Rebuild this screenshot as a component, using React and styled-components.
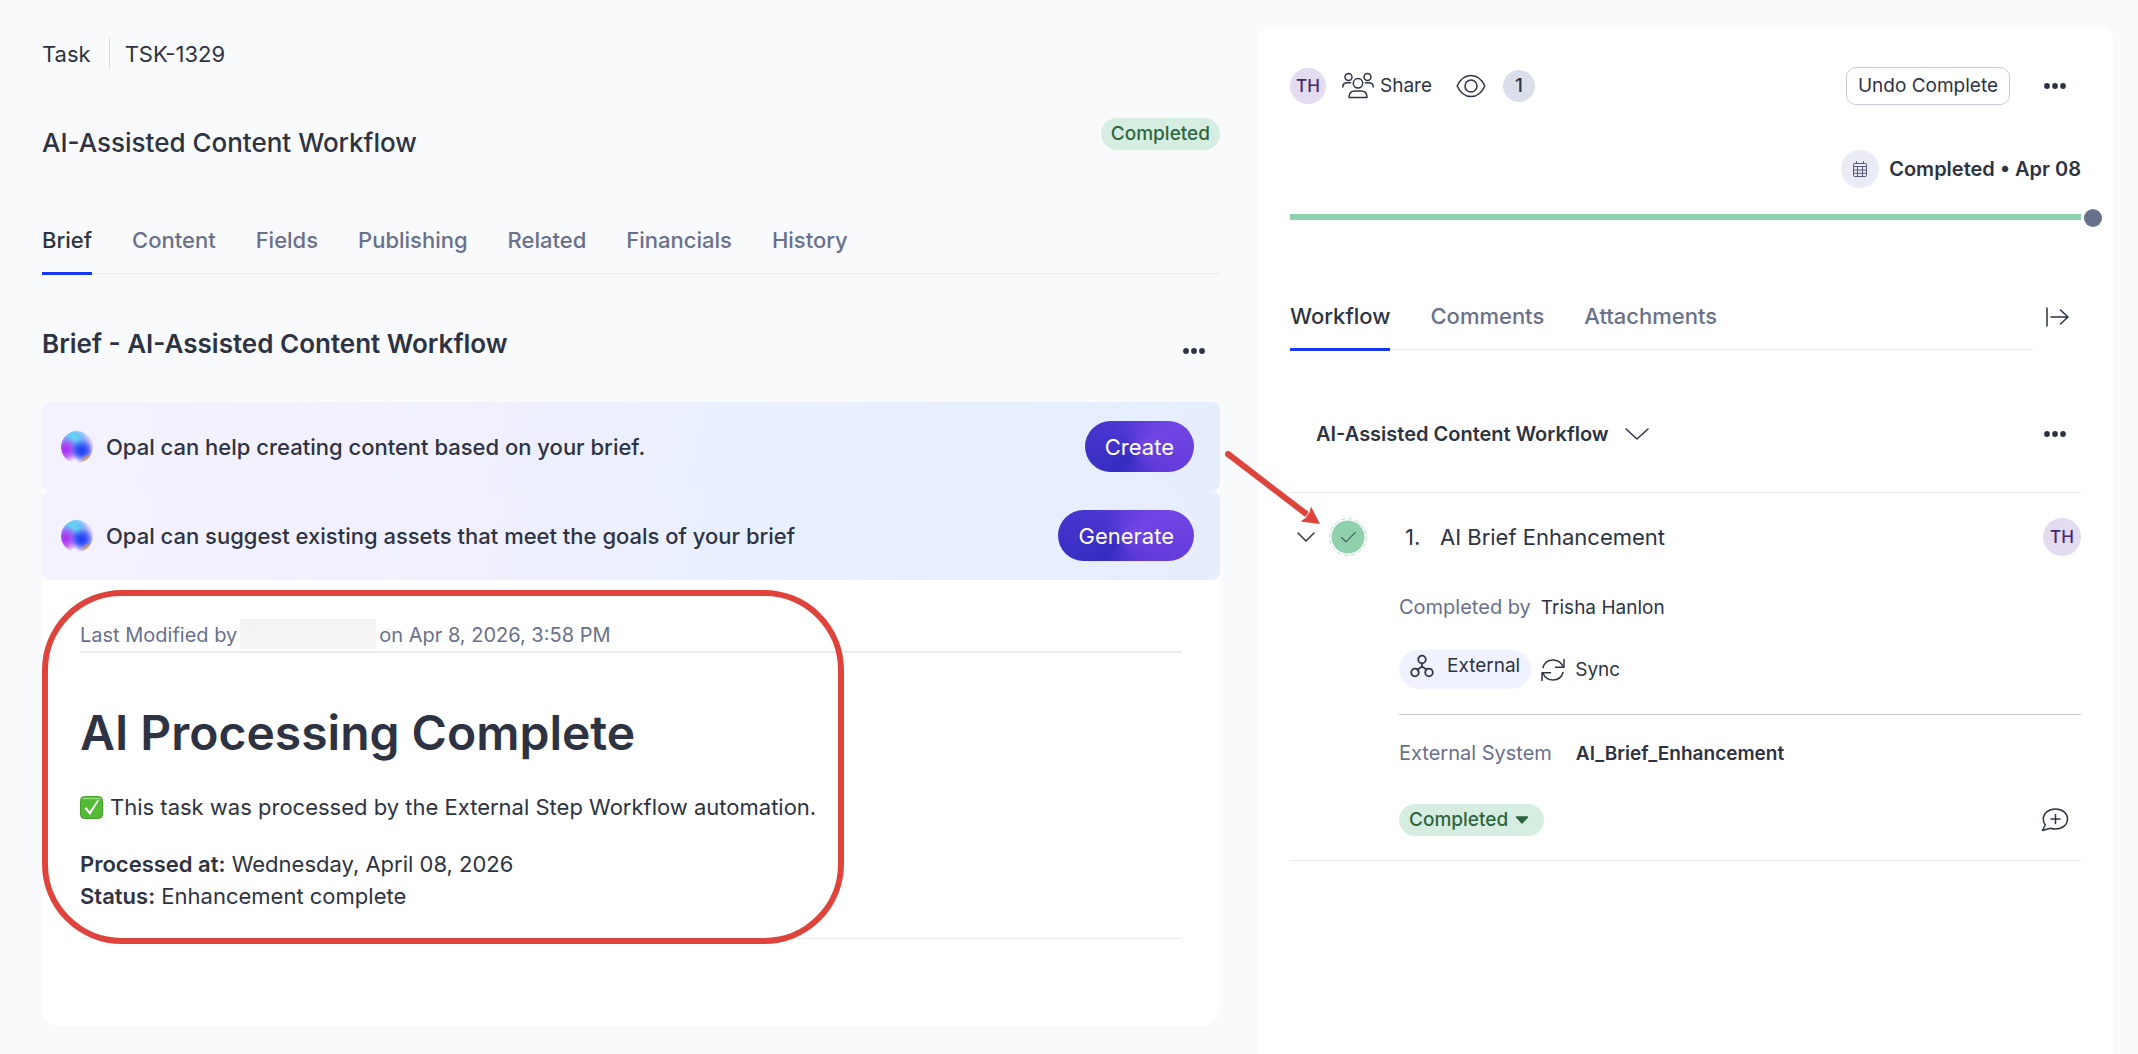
import React, { useState } from "react";
import styled, { createGlobalStyle } from "styled-components";

const TASK_TABS = [
  "Brief",
  "Content",
  "Fields",
  "Publishing",
  "Related",
  "Financials",
  "History",
];
const PANEL_TABS = ["Workflow", "Comments", "Attachments"];
const SUGGESTIONS = [
  {
    text: "Opal can help creating content based on your brief.",
    action: "Create",
  },
  {
    text: "Opal can suggest existing assets that meet the goals of your brief",
    action: "Generate",
  },
];

const Icon = ({ width = 24, height = 24, stroke = 1.5, children, ...rest }) => (
  <svg
    width={width}
    height={height}
    viewBox={`0 0 ${width} ${height}`}
    fill="none"
    stroke="currentColor"
    strokeWidth={stroke}
    strokeLinecap="round"
    strokeLinejoin="round"
    aria-hidden="true"
    {...rest}
  >
    {children}
  </svg>
);

const DotsIcon = () => (
  <Icon width={22} height={6} fill="currentColor" stroke={0}>
    <circle cx="3" cy="3" r="2.900" />
    <circle cx="11" cy="3" r="2.900" />
    <circle cx="19" cy="3" r="2.900" />
  </Icon>
);

const ShareIcon = () => (
  <Icon width={32} height={28}>
    <circle cx="6.500" cy="5" r="3.500" />
    <circle cx="25.500" cy="5" r="3.500" />
    <circle cx="16" cy="11.300" r="4.700" />
    <path d="M.8 15c0-2.700 2-4.200 4.600-4.200h3.200" />
    <path d="M31.200 15c0-2.700-2-4.200-4.600-4.200h-3.200" />
    <path d="M7 25.500c0-4.600 2.600-6.500 6-6.500h6c3.400 0 6 1.900 6 6.500z" />
  </Icon>
);

const EyeIcon = () => (
  <Icon width={30} height={24}>
    <path d="M1.200 12C4 5.500 9 1.500 15 1.500S26 5.500 28.800 12C26 18.500 21 22.500 15 22.500S4 18.500 1.200 12z" />
    <circle cx="15" cy="12" r="6" />
  </Icon>
);

const CalendarIcon = () => (
  <Icon width={16} height={18} stroke={1}>
    <rect x="1.500" y="3.500" width="13" height="13" rx="1" />
    <path d="M1.500 6.500h13M1.500 10h13M1.500 13.300h13M5.500 6.500v10M10.500 6.500v10M4.500 1.500v2M11.500 1.500v2" />
  </Icon>
);

const CollapseIcon = () => (
  <Icon width={24} height={20}>
    <path d="M2 1v18M6 10h17M15.500 3l7.500 7-7.500 7" />
  </Icon>
);

const ChevronIcon = ({ width, height }) => (
  <Icon width={width} height={height}>
    <path d={`M1 1l${width / 2 - 1} ${height - 2} ${width / 2 - 1}-${height - 2}`} />
  </Icon>
);

const CheckIcon = () => (
  <Icon width={38} height={38} stroke={1}>
    <circle cx="19" cy="19" r="18.400" stroke="#b9e0ca" strokeDasharray="4 3.200" />
    <circle cx="19" cy="19" r="16.500" fill="#90d0ac" stroke="none" />
    <path d="M12.500 19.500l4.500 4.300 9.300-9.300" stroke="#4a6166" strokeWidth="1.200" />
  </Icon>
);

const ExternalIcon = () => (
  <Icon stroke={1.8}>
    <circle cx="12" cy="5.500" r="3.800" />
    <circle cx="5" cy="18.500" r="3.800" />
    <circle cx="19" cy="18.500" r="3.800" />
    <path d="M12 9.300v3.200M12 12.500l-4.500 3M12 12.500l4.500 3" />
  </Icon>
);

const SyncIcon = () => (
  <Icon>
    <path d="M2 9.500C3.300 5 7.200 2 12 2c4.500 0 8.200 2.600 10 6.500" />
    <path d="M23 1.500V9.200H14.500" />
    <path d="M22 14.500C20.700 19 16.800 22 12 22c-4.500 0-8.200-2.600-10-6.500" />
    <path d="M1 22.500V14.800H9.500" />
  </Icon>
);

const AddCommentIcon = () => (
  <Icon width={28} height={26}>
    <path d="M14.500 2C21.500 2 26.500 6.200 26.500 12s-5 10-12 10c-1.800 0-3.500-.3-5-.8L1.500 23.500l2.700-5.500C3 16.300 2.300 14.200 2.300 12 2.300 6.200 7.500 2 14.500 2z" />
    <path d="M14.500 7.500v9M10 12h9" />
  </Icon>
);

function Tabs({ items }) {
  const [active, setActive] = useState(items[0]);
  return (
    <TabList role="tablist">
      {items.map((item) => (
        <Tab
          key={item}
          type="button"
          role="tab"
          aria-selected={item === active}
          $active={item === active}
          onClick={() => setActive(item)}
        >
          {item}
        </Tab>
      ))}
    </TabList>
  );
}

function MoreButton() {
  return (
    <DotsButton type="button" aria-label="More options">
      <DotsIcon />
    </DotsButton>
  );
}

function TaskBrief() {
  return (
    <Main>
      <Crumbs>
        <span>Task</span>
        <CrumbLine />
        <span>TSK-1329</span>
      </Crumbs>
      <TitleRow>
        <Title>AI-Assisted Content Workflow</Title>
        <StatusPill>Completed</StatusPill>
      </TitleRow>
      <Tabs items={TASK_TABS} />
      <BriefHeader>
        <BriefTitle>Brief - AI-Assisted Content Workflow</BriefTitle>
        <MoreButton />
      </BriefHeader>
      <Card>
        {SUGGESTIONS.map(({ text, action }) => (
          <Banner key={action}>
            <Orb />
            <BannerText>{text}</BannerText>
            <OpalButton type="button">{action}</OpalButton>
          </Banner>
        ))}
        <Document>
          <Modified>
            Last Modified by
            <Redacted />
            on Apr 8, 2026, 3:58 PM
          </Modified>
          <DocTitle>AI Processing Complete</DocTitle>
          <Paragraph>
            <TickBox />
            This task was processed by the External Step Workflow automation.
          </Paragraph>
          <Paragraph as="div">
            <div>
              <strong>Processed at:</strong> Wednesday, April 08, 2026
              <br />
              <strong>Status:</strong> Enhancement complete
            </div>
          </Paragraph>
          <Rule />
          <Highlight />
        </Document>
      </Card>
    </Main>
  );
}

function TickBox() {
  return (
    <svg width="23" height="23" viewBox="0 0 23 23" aria-hidden="true">
      <rect x=".5" y=".5" width="22" height="22" rx="4" fill="#52bb34" stroke="#43a02a" />
      <path d="M3 2.500h17" stroke="#8fdc78" strokeWidth="1.500" strokeLinecap="round" />
      <path d="M4.500 12.500l2-1.500 3 4.500L17.500 4l1.500.5-9 14.500z" fill="#fff" />
    </svg>
  );
}

function WorkflowPanel() {
  const [open, setOpen] = useState(true);
  return (
    <Panel>
      <Toolbar>
        <Avatar>TH</Avatar>
        <ShareButton type="button">
          <ShareIcon />
          Share
        </ShareButton>
        <IconButton type="button" aria-label="Watchers">
          <EyeIcon />
        </IconButton>
        <Count>1</Count>
        <UndoButton type="button">Undo Complete</UndoButton>
        <MoreButton />
      </Toolbar>
      <DueRow>
        <CalendarDot>
          <CalendarIcon />
        </CalendarDot>
        Completed • Apr 08
      </DueRow>
      <Progress>
        <ProgressEnd />
      </Progress>
      <PanelNav>
        <Tabs items={PANEL_TABS} />
        <CollapseButton type="button" aria-label="Collapse panel">
          <CollapseIcon />
        </CollapseButton>
      </PanelNav>
      <WorkflowHeader>
        <WorkflowName type="button">
          AI-Assisted Content Workflow
          <ChevronIcon width={24} height={12} />
        </WorkflowName>
        <MoreButton />
      </WorkflowHeader>
      <Step>
        <StepControls>
          <IconButton
            type="button"
            aria-label="Toggle step"
            aria-expanded={open}
            onClick={() => setOpen(!open)}
          >
            <ChevronIcon width={18} height={10} />
          </IconButton>
          <IconButton type="button" aria-label="Mark step">
            <CheckIcon />
          </IconButton>
          <Pointer width="110" height="86" viewBox="0 0 110 86" aria-hidden="true">
            <path d="M9 9L88 69.500" stroke="#df443c" strokeWidth="6" />
            <circle cx="9" cy="9" r="3" fill="#df443c" />
            <path d="M101 79L92 61.500L90.500 67.500L86.500 73L81.500 76.500z" fill="#df443c" />
          </Pointer>
        </StepControls>
        <StepHead>
          <StepNumber>1.</StepNumber>
          <StepName>AI Brief Enhancement</StepName>
          <Avatar $large>TH</Avatar>
        </StepHead>
        {open && (
          <StepBody>
            <Field $gap={10}>
              <Muted>Completed by</Muted>
              <span>Trisha Hanlon</span>
            </Field>
            <SyncRow>
              <ExternalPill>
                <ExternalIcon />
                External
              </ExternalPill>
              <SyncButton type="button">
                <SyncIcon />
                Sync
              </SyncButton>
            </SyncRow>
            <Field $gap={24}>
              <Muted>External System</Muted>
              <strong>AI_Brief_Enhancement</strong>
            </Field>
            <StepFooter>
              <StatusField>
                <StatusSelect aria-label="Step status">
                  <option>Completed</option>
                </StatusSelect>
                <Icon width={14} height={8} fill="currentColor">
                  <path d="M1.500 1h11L7 7z" />
                </Icon>
              </StatusField>
              <CommentButton type="button" aria-label="Add comment">
                <AddCommentIcon />
              </CommentButton>
            </StepFooter>
          </StepBody>
        )}
      </Step>
    </Panel>
  );
}

export default function App() {
  return (
    <>
      <GlobalStyle />
      <Page>
        <TaskBrief />
        <WorkflowPanel />
      </Page>
    </>
  );
}

const GlobalStyle = createGlobalStyle`
  * {
    box-sizing: border-box;
  }
  body {
    margin: 0;
    background: #f9fafc;
    color: #2d3342;
    font: 400 22px/32px Inter, sans-serif;
  }
  h1, h2, p {
    margin: 0;
  }
  strong {
    font-weight: 600;
  }
  svg {
    display: block;
    flex: none;
  }
  button, select {
    margin: 0;
    padding: 0;
    border: 0;
    background: none;
    color: inherit;
    font: inherit;
    cursor: pointer;
  }
`;
const Page = styled.div`
  display: grid;
  grid-template-columns: minmax(0, 1178fr) minmax(0, 855fr);
  gap: 38px;
  min-height: 100vh;
  padding: 28px 25px 0 42px;
`;
const Main = styled.main`
  padding-top: 10px;
`;
const Crumbs = styled.div`
  display: flex;
  align-items: center;
  gap: 15px;
`;
const CrumbLine = styled.span`
  width: 1px;
  height: 32px;
  margin-left: 3px;
  background: #d9dce6;
`;
const TitleRow = styled.div`
  display: flex;
  align-items: flex-start;
  justify-content: space-between;
  margin-top: 48px;
`;
const Title = styled.h1`
  padding-top: 9px;
  font-size: 26px;
  font-weight: 500;
`;
const StatusPill = styled.span`
  padding: 0 10px;
  border-radius: 16px;
  background: #d6eee1;
  color: #2f653c;
  font-size: 19px;
  font-weight: 500;
`;
const TabList = styled.div`
  display: flex;
  flex: 1;
  gap: 40px;
  border-bottom: 1px solid #e9eaef;
  ${Main} > & {
    margin-top: 65px;
  }
`;
const Tab = styled.button`
  margin-bottom: -2px;
  padding-bottom: 16px;
  border-bottom: 3px solid ${({ $active }) => ($active ? "#1438f5" : "transparent")};
  color: ${({ $active }) => ($active ? "#2d3342" : "#69708c")};
  font-weight: 500;
`;
const BriefHeader = styled.div`
  display: flex;
  align-items: flex-end;
  justify-content: space-between;
  margin: 54px 0 35px;
`;
const BriefTitle = styled.h2`
  padding-bottom: 7px;
  font-size: 26px;
  font-weight: 600;
`;
const DotsButton = styled.button`
  display: flex;
  align-items: center;
  justify-content: center;
  width: 52px;
  height: 32px;
`;
const Card = styled.section`
  border-radius: 8px 8px 18px 18px;
  background: #fff;
`;
const Banner = styled.div`
  display: flex;
  align-items: center;
  padding: 19px 26px 19px 19px;
  border-radius: 8px;
  background: linear-gradient(105deg, #f5f2ff 0%, #f2f0fe 30%, #e9effe 60%, #e6eefe 100%);
`;
const Orb = styled.span`
  width: 32px;
  height: 32px;
  border-radius: 50%;
  background:
    radial-gradient(circle at 86% 92%, #e8962e 0, #e8962ebb 7%, transparent 18%),
    radial-gradient(circle at 64% 62%, #1a3cf5 0, #2447f5dd 16%, transparent 40%),
    radial-gradient(circle at 14% 58%, #a72bf0 0, #b03cf2cc 18%, transparent 42%),
    radial-gradient(circle at 36% 24%, #66daf8 0, #5cc6f4dd 22%, transparent 48%),
    radial-gradient(circle at 40% 94%, #fdf6fe 0, #e6cffa 24%, transparent 46%),
    radial-gradient(circle at 50% 55%, #5a6cf6 0, #a79cf8 50%, #e4defd 72%);
`;
const BannerText = styled.p`
  flex: 1;
  margin-left: 13px;
  font-weight: 500;
`;
const OpalButton = styled.button`
  height: 51px;
  padding: 0 20px;
  border-radius: 26px;
  background: conic-gradient(
    from 220deg at 46% 56%,
    #352cc1 0deg,
    #4a36d0 100deg,
    #7245e5 200deg,
    #5f3ad8 270deg,
    #352cc1 360deg
  );
  color: #fff;
`;
const Document = styled.div`
  position: relative;
  padding: 39px 38px 87px;
`;
const Modified = styled.div`
  display: flex;
  gap: 3px;
  border-bottom: 2px solid #ebebed;
  color: #69708c;
  font-size: 20px;
`;
const Redacted = styled.span`
  width: 136px;
  height: 30px;
  background: linear-gradient(#f4f2f3, #f7f6f7);
`;
const DocTitle = styled.h2`
  margin-top: 52px;
  font-size: 48px;
  font-weight: 600;
  line-height: 56px;
`;
const Paragraph = styled.p`
  display: flex;
  align-items: center;
  gap: 7px;
  margin-top: 25px;
  ${DocTitle} + & {
    margin-top: 30px;
  }
`;
const Rule = styled.hr`
  height: 1px;
  margin: 26px 0 0;
  border: 0;
  background: #e9eaec;
`;
const Highlight = styled.span`
  position: absolute;
  top: 10px;
  left: 0;
  width: 802px;
  height: 354px;
  border: 6px solid #df443c;
  border-radius: 80px;
  pointer-events: none;
`;
const Panel = styled.aside`
  padding: 39px 32px;
  border-radius: 12px 12px 0 0;
  background: #fff;
  font-size: 19px;
`;
const Toolbar = styled.div`
  display: flex;
  align-items: center;
`;
const Avatar = styled.span`
  display: flex;
  align-items: center;
  justify-content: center;
  width: ${({ $large }) => ($large ? "38px" : "36px")};
  height: ${({ $large }) => ($large ? "38px" : "36px")};
  border-radius: 50%;
  background: #e3dbf0;
  color: #432874;
  font-size: 17px;
  font-weight: 500;
`;
const IconButton = styled.button`
  display: flex;
  align-items: center;
`;
const ShareButton = styled(IconButton)`
  gap: 6px;
  margin: 0 24px 0 16px;
`;
const Count = styled.span`
  width: 32px;
  margin-left: 17px;
  border-radius: 50%;
  background: #dadeea;
  font-weight: 500;
  text-align: center;
`;
const UndoButton = styled.button`
  height: 38px;
  margin: 0 19px 0 auto;
  padding: 0 11px;
  border: 1px solid #c9cbdb;
  border-radius: 10px;
`;
const DueRow = styled.div`
  display: flex;
  align-items: center;
  justify-content: flex-end;
  gap: 10px;
  margin-top: 45px;
  font-size: 20px;
  font-weight: 600;
`;
const CalendarDot = styled.span`
  display: flex;
  align-items: center;
  justify-content: center;
  width: 38px;
  height: 38px;
  border-radius: 50%;
  background: #e9ecf5;
  color: #565a78;
`;
const Progress = styled.div`
  position: relative;
  height: 6px;
  margin-top: 26px;
  background: #90d0ac;
`;
const ProgressEnd = styled.span`
  position: absolute;
  top: -5px;
  right: -21px;
  width: 18px;
  height: 18px;
  border-radius: 50%;
  background: #69708c;
`;
const PanelNav = styled.div`
  display: flex;
  align-items: flex-start;
  margin-top: 80px;
  font-size: 22px;
`;
const CollapseButton = styled(IconButton)`
  justify-content: center;
  width: 48px;
  height: 34px;
`;
const WorkflowHeader = styled.div`
  display: flex;
  align-items: center;
  justify-content: space-between;
  margin-top: 68px;
  padding: 0 0 42px 26px;
  border-bottom: 1px solid #e7e9f4;
`;
const WorkflowName = styled(IconButton)`
  gap: 16px;
  font-size: 20px;
  font-weight: 600;
`;
const Step = styled.div`
  display: grid;
  grid-template-columns: 109px minmax(0, 1fr);
  padding: 25px 0 24px;
  border-bottom: 1px solid #e7e9f4;
`;
const StepControls = styled.div`
  position: relative;
  display: flex;
  gap: 14px;
  height: 38px;
  padding-left: 7px;
`;
const Pointer = styled.svg`
  position: absolute;
  top: -73px;
  left: -71px;
  fill: none;
  pointer-events: none;
`;
const StepHead = styled.div`
  display: flex;
  align-items: center;
  padding-left: 6px;
  font-size: 22px;
`;
const StepNumber = styled.span`
  width: 35px;
`;
const StepName = styled.span`
  flex: 1;
`;
const StepBody = styled.div`
  grid-column: 2;
  padding-top: 35px;
`;
const Field = styled.div`
  display: flex;
  align-items: baseline;
  gap: ${({ $gap }) => $gap}px;
`;
const Muted = styled.span`
  color: #69708c;
  font-size: 20px;
`;
const SyncRow = styled.div`
  display: flex;
  align-items: center;
  gap: 10px;
  margin: 26px 0 22px;
  padding-bottom: 25px;
  border-bottom: 1px solid #c6c8d2;
`;
const ExternalPill = styled.span`
  display: flex;
  align-items: center;
  gap: 13px;
  height: 39px;
  padding: 0 11px 7px;
  border-radius: 20px;
  background: #f0f2ff;
`;
const SyncButton = styled(IconButton)`
  gap: 10px;
`;
const StepFooter = styled.div`
  display: flex;
  align-items: center;
  justify-content: space-between;
  margin-top: 34px;
`;
const StatusField = styled(StatusPill)`
  position: relative;
  display: flex;
  align-items: center;
  svg {
    position: absolute;
    right: 15px;
    pointer-events: none;
  }
`;
const StatusSelect = styled.select`
  height: 32px;
  padding-right: 25px;
  appearance: none;
  outline: 0;
`;
const CommentButton = styled(IconButton)`
  justify-content: center;
  width: 52px;
`;
